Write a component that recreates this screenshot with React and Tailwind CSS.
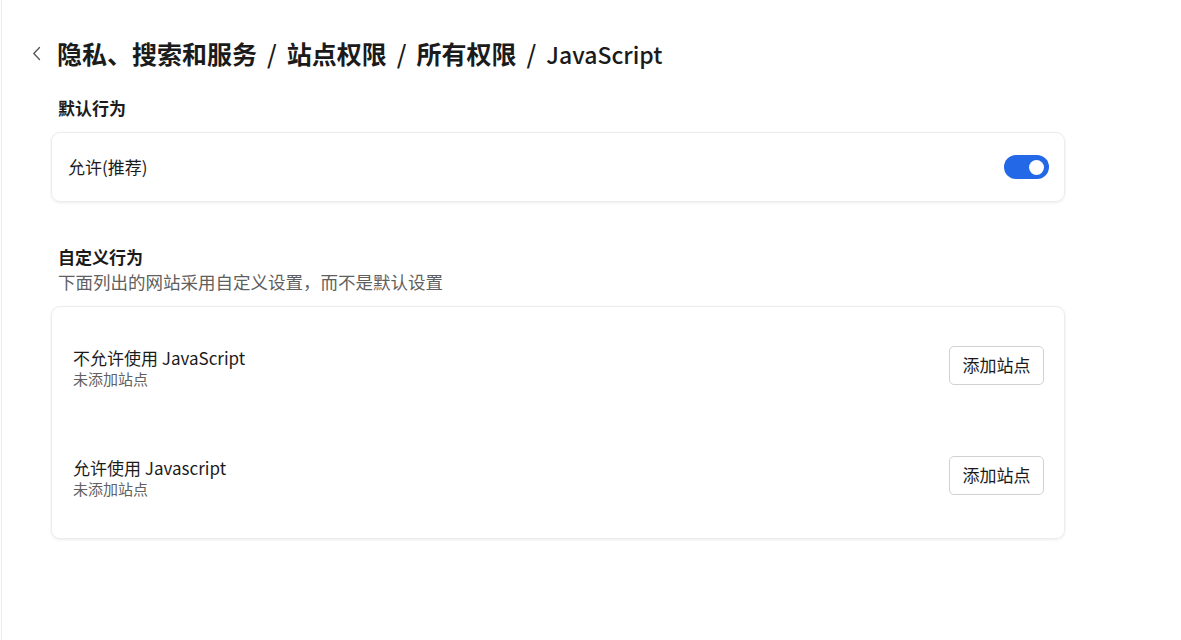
export default function App() {
  const font = { fontFamily: '"Segoe UI", "Noto Sans CJK SC", sans-serif' };
  const parts = ['隐私、搜索和服务', '站点权限', '所有权限', 'JavaScript'];
  return (
    <div style={font} className="min-h-[640px] w-[1181px] bg-white text-[#1b1b1b] flex">
      <div className="w-[2px] shrink-0 border-r border-[#ebebeb]" />
      <div className="w-[1063px]">
        <div className="flex items-center h-[44px] mt-[31px]">
          <div className="w-[55px] flex justify-end pr-[16px]">
            <svg width="9" height="15" viewBox="0 0 9 15" fill="none">
              <path d="M7.5 1.5 L1.8 7.5 L7.5 13.5" stroke="#555" strokeWidth="1.3" strokeLinecap="round" strokeLinejoin="round" />
            </svg>
          </div>
          <h1 className="text-[25px] font-semibold leading-[32px] whitespace-nowrap flex items-baseline">
            {parts.map((p, i) => (
              <span key={p} className="flex items-baseline">
                {i > 0 && <span className="px-[10px] font-medium">/</span>}
                <span className={i === 3 ? 'font-medium text-[23px]' : ''}>{p}</span>
              </span>
            ))}
          </h1>
        </div>

        <div className="pl-[49px]">
          <div className="ml-[7px] mt-[21px] text-[17px] font-semibold leading-[24px]">默认行为</div>
          <div className="mt-[12px] h-[70px] rounded-[9px] border border-[#ececec] shadow-[0_1px_3px_rgba(0,0,0,0.08)] flex items-center justify-between pl-[16px] pr-[15px]">
            <span className="text-[17px] leading-[22px]">允许(推荐)</span>
            <div className="w-[45px] h-[24px] rounded-full bg-[#2368e6] flex items-center justify-end pr-[5px]">
              <div className="w-[15px] h-[15px] rounded-full bg-white" />
            </div>
          </div>

          <div className="ml-[7px] mt-[43px] text-[17px] font-semibold leading-[24px]">自定义行为</div>
          <div className="ml-[7px] mt-[1px] text-[17.5px] leading-[24px] text-[#5f5f5f]">下面列出的网站采用自定义设置，而不是默认设置</div>
          <div className="mt-[12px] rounded-[9px] border border-[#ececec] shadow-[0_1px_3px_rgba(0,0,0,0.08)] pt-[3px] pb-[8px]">
            {[
              '不允许使用 JavaScript',
              '允许使用 Javascript',
            ].map((t) => (
              <div key={t} className="h-[110px] flex items-center justify-between pl-[21px] pr-[20px]">
                <div className="flex flex-col pt-[6px]">
                  <span className="text-[17px] leading-[22px]">{t}</span>
                  <span className="text-[15px] leading-[20px] text-[#616161]">未添加站点</span>
                </div>
                <button className="w-[95px] h-[39px] rounded-[5px] border border-[#d1d1d1] bg-white text-[17px] text-[#1b1b1b]">
                  添加站点
                </button>
              </div>
            ))}
          </div>
        </div>
      </div>
    </div>
  );
}
